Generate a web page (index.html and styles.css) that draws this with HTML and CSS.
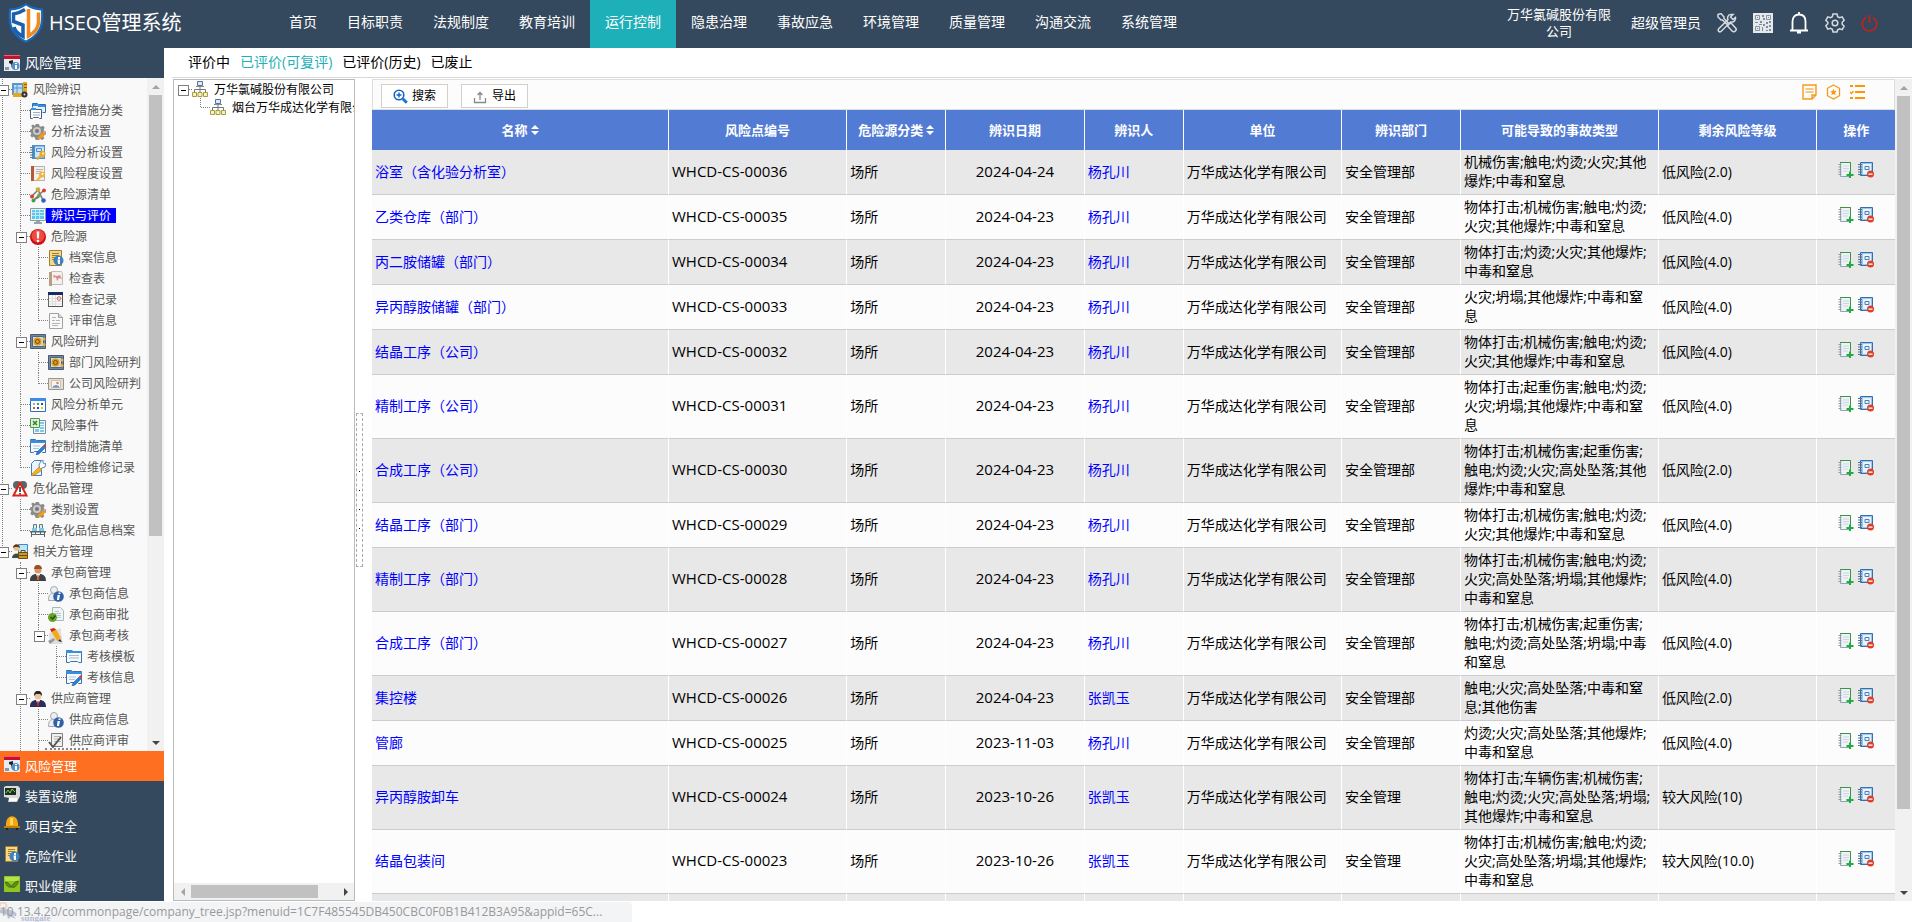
FILE: index.html
```html
<!DOCTYPE html>
<html lang="zh-CN">
<head>
<meta charset="utf-8">
<title>HSEQ管理系统</title>
<link rel="stylesheet" href="styles.css">
</head>
<body>
<svg class="sprite" aria-hidden="true">
  <symbol id="i-risk" viewBox="0 0 16 16"><path fill="#e9edf2" d="M0 0h16v16H0z"/><path fill="#c8102e" d="M0 0h16v4H0z"/><path fill="#f06070" d="M0 0h16v1H0z"/><path fill="#222" d="M5 6l4-1v2l1 6H8l-1-4-2-1z"/><circle cx="11.500" cy="11" r="4" fill="#5a8fc4"/><path fill="#fff" d="M11 8h2v1h-2zM11 10h2v4h-2z"/><path fill="#8a97a8" d="M1 12h4v3H1z"/></symbol>
  <symbol id="i-survey" viewBox="0 0 16 16"><path fill="#5b95cf" d="M0 1h12v12H0z"/><path fill="#b9dcf5" d="M2 3h8v8H2z"/><path stroke="#5b95cf" d="M5 3v8M2 6h8" fill="none"/><path fill="#e2a71a" d="M11 0h4v10h-4z"/><path fill="#8a5f00" d="M12 2h3v1h-3zM12 5h3v1h-3z"/><path fill="#e2a71a" d="M1 11h10v4H1z"/><circle cx="12.500" cy="12.500" r="3" fill="#333"/><circle cx="12.500" cy="12.500" r="1" fill="#ddd"/></symbol>
  <symbol id="i-folders" viewBox="0 0 16 16"><path fill="#e3f1fc" stroke="#2a6fb8" d="M2.500 4.500v-4h5l1 1h7v8h-3"/><path fill="#3a8ee0" d="M3 1h5v2H3zM8 2h7v2H8z"/><path fill="#fbfdff" stroke="#4a6178" d="M.5 15.500v-9h11v9h-2l-1-1h-5l-1 1z"/><path fill="#3a8ee0" d="M1 5h5v2H1z"/><path stroke="#9db0c2" d="M3 9.500h7M3 12h7"/></symbol>
  <symbol id="i-gear" viewBox="0 0 16 16"><path fill="#8b8b8b" d="M6 0h3l.5 2 1.500.7 2-1 1.800 2-1.200 1.800.6 1.500 1.800.6v3l-2 .5-.7 1.200 1 2-2 1.700-2-1-1.200.5-.6 1.500H6l-.6-2L4 12.500l-2 1-1.700-2 1-1.800L1 8.500 0 8V5.500L1.700 5l.5-1.500-1-1.800L3 .5 4.800 1.700z"/><circle cx="7" cy="7" r="4" fill="#c9c9c9"/><circle cx="7" cy="7" r="2" fill="#777"/><path fill="#f09a1a" d="M8 13l5-5 2.500 2.500-5 4.500-3 .8z"/><path fill="#e29bb0" d="M13 7.500l1.500-1 1.500 2-1 1.500z"/></symbol>
  <symbol id="i-bookkey" viewBox="0 0 16 16"><path fill="#4d8fcc" d="M2 0h13v14H2z"/><path fill="#cfe5f7" d="M5 1.500h9v11H5z"/><path stroke="#5a7fa5" d="M0 2.500h4M0 5h4M0 7.500h4M0 10h4M0 12.500h4"/><path fill="none" stroke="#4d8fcc" d="M6.500 3.500h5v3h-5z"/><circle cx="12.500" cy="9" r="3" fill="#eda81e"/><circle cx="13" cy="8.500" r="1" fill="#fff"/><path stroke="#eda81e" stroke-width="2" d="M11 10.500l-4 4"/></symbol>
  <symbol id="i-pagekey" viewBox="0 0 16 16"><path fill="#f4efea" stroke="#b9b0a8" d="M2.500.5h12v14h-12z"/><path fill="#b5593a" d="M1 0h3v15H1z"/><path stroke="#b0b7c2" d="M6 3.500h7M6 5.500h5M6 7.500h4"/><circle cx="12" cy="8.500" r="3" fill="#f0b63a"/><circle cx="12.500" cy="8" r="1" fill="#fff"/><path stroke="#f0b63a" stroke-width="2" d="M11 10l-4 4.500"/></symbol>
  <symbol id="i-molecule" viewBox="0 0 16 16"><path stroke="#777" stroke-width="1.500" fill="none" d="M2 9l6-6 5 10M13 4L5 12M3 13l6-3"/><circle cx="8" cy="2.500" r="2.300" fill="#d8a63a"/><circle cx="14" cy="3.500" r="1.900" fill="#e03a2a"/><circle cx="2" cy="9.500" r="2" fill="#e03a2a"/><circle cx="3.500" cy="13.500" r="2" fill="#3ea53a"/><circle cx="9" cy="8.500" r="2" fill="#7aa05a"/><circle cx="13.500" cy="13.500" r="2.300" fill="#2f62c0"/></symbol>
  <symbol id="i-screen" viewBox="0 0 16 16"><path fill="#eef3f5" stroke="#8b9ba3" d="M.5.500h15v12H.5z"/><path fill="#5cc6ec" d="M2 2h12v9H2z"/><path stroke="#bfe9f8" d="M5.500 2v9M9.500 2v9M2 4.500h12M2 7.500h12"/><path fill="#9aa5aa" d="M6 13h4v1h2v2H4v-2h2z"/></symbol>
  <symbol id="i-alert" viewBox="0 0 16 16"><circle cx="8" cy="8" r="8" fill="#c9130d"/><circle cx="8" cy="7" r="6.500" fill="#ee4a40"/><path fill="#fff" d="M6.700 2.500h2.600L9 9.500H7z"/><circle cx="8" cy="12" r="1.300" fill="#fff"/></symbol>
  <symbol id="i-docinfo" viewBox="0 0 16 16"><path fill="#f3d88e" stroke="#a67c2a" d="M1.500.5h12v15h-12z"/><path stroke="#a67c2a" d="M4 3.500h7M4 5.500h7M4 7.500h3M4 9.500h2"/><circle cx="10.500" cy="10.500" r="5" fill="#3f82c0"/><path fill="#fff" d="M10 7h2v2h-2zM9.500 9.500H12v4.500h-2z"/></symbol>
  <symbol id="i-check" viewBox="0 0 16 16"><path fill="#f4f1ee" stroke="#c4bcb4" d="M3.500.5h10l1 2v11h-11z"/><path fill="#b89f84" d="M1 1h3v14H1z"/><path fill="#e08a88" d="M5 4l4 1 3-1 2 4-3-1-2 3-1-4-2 1z"/></symbol>
  <symbol id="i-calendar" viewBox="0 0 16 16"><path fill="#fafafa" stroke="#666" d="M.5.500h14v14H.5z"/><path fill="#1c2a63" d="M0 0h15v3H0z"/><path fill="#555" d="M14 3h1v12H0v-1h14z"/><path stroke="#ddd" d="M1 6.500h13M1 9.500h13M1 12h13M4.500 3v11M7.500 3v11"/><circle cx="11" cy="6.500" r="1.800" fill="none" stroke="#d5554f"/></symbol>
  <symbol id="i-doc" viewBox="0 0 16 16"><path fill="#f8f8f8" stroke="#a2a2a2" d="M1.500.5h9l4 4v11h-13z"/><path fill="#d6d6d6" stroke="#a2a2a2" d="M10.500.5v4h4"/><path stroke="#b5b5b5" d="M4 4.500h4M4 7.500h3M8 7.500h4M4 10.500h8M4 12.500h6"/></symbol>
  <symbol id="i-safe" viewBox="0 0 16 16"><path fill="#7286a0" stroke="#4a5c74" d="M.5.500h15v14H.5z"/><path fill="#d7dbe0" stroke="#53657d" d="M2.500 2.500h11v10h-11z"/><circle cx="7.500" cy="7.500" r="4" fill="#dc9b1c"/><circle cx="7.500" cy="7.500" r="2" fill="none" stroke="#7a4f00"/><circle cx="14" cy="5" r="1.500" fill="#f0b030"/><circle cx="14" cy="10.500" r="1.500" fill="#f0b030"/></symbol>
  <symbol id="i-card" viewBox="0 0 16 16"><path fill="#e6dfd5" stroke="#9c948a" d="M.5 2.500h15v11H.5z"/><path fill="#f7f4f0" stroke="#c9c0b4" d="M3.500 4.500h9v7h-9z"/><circle cx="9.500" cy="7" r="1.300" fill="#d88b4a"/><path fill="#6d98c6" d="M5 10l3-1 3 1v1.500H5z"/></symbol>
  <symbol id="i-grid" viewBox="0 0 16 16"><path fill="#fff" stroke="#2a6fc0" d="M.5 1.500h15v13H.5z"/><path fill="#3b8bea" d="M0 1h16v3H0z"/><path fill="#8ab4e8" d="M3 6h2v2H3z"/><path fill="#f0c01a" d="M11 10h2v2h-2z"/><path fill="#35a04a" d="M7 6h2v2H7z"/><path fill="#1e4fa0" d="M11 6h2v2h-2zM7 10h2v2H7z"/><path fill="#e0632a" d="M3 10h2v2H3z"/></symbol>
  <symbol id="i-sheet" viewBox="0 0 16 16"><path fill="#f1fafd" stroke="#78909c" d="M3.500 2.500h12v13h-12z"/><path fill="#7ccbe4" d="M10 4h4v2h-4zM10 7h4v1h-4zM10 9h4v2h-4zM5 11h4v3H5zM10 12h4v2h-4z"/><path fill="#dff0d8" stroke="#4c9a46" d="M.5.500h9v9h-9z"/><path stroke="#2f8330" stroke-width="1.500" d="M3 3l4 4M7 3L3 7"/></symbol>
  <symbol id="i-folderpen" viewBox="0 0 16 16"><path fill="#f4faff" stroke="#3f6fa5" d="M.5 13.500v-13h5l1 1h9v12h-3l-1-1h-7l-1 1z"/><path fill="#3a8ee0" d="M0 1h6l1 1h9v2H0z"/><path stroke="#b3c2d0" d="M3 7h7M3 9.500h6"/><path fill="#2a7fd6" stroke="#1d4f8a" stroke-width=".5" d="M7 13l6-6 2 2-6 6-3 1z"/><path fill="#e23a2a" d="M13 6.500l1.500-1.500L16 7l-1.500 1.500z"/></symbol>
  <symbol id="i-folder" viewBox="0 0 16 16"><path fill="#f4faff" stroke="#3f6fa5" d="M.5 13.500v-12h5l1 1h9v11h-3l-1-1h-7l-1 1z"/><path fill="#3a8ee0" d="M0 1h6l1 1h9v2H0z"/><path stroke="#a9b9c8" d="M3 6.500h10M3 9h10"/></symbol>
  <symbol id="i-wrench" viewBox="0 0 16 16"><path fill="#eaf3fb" stroke="#3f7fc0" d="M1.500 3.500l3-3h7v15h-10z"/><path fill="#fff" stroke="#5b87b5" d="M9 5l2-4 2-1v3l2 1 1-1-1 4-3 1-2 2z"/><path fill="#f4b01e" stroke="#bd7a0a" stroke-width=".6" d="M2 14l7-7 3 3-7 5-3 1z"/></symbol>
  <symbol id="i-warn" viewBox="0 0 16 16"><circle cx="5" cy="4" r="4" fill="#5e6468"/><circle cx="11" cy="4" r="4" fill="#5e6468"/><path fill="#fff" stroke="#d9231c" stroke-width="2" d="M8 2l6.500 12.500h-13z"/><path fill="#222" d="M7.300 6h1.500v5H7.300zM7.300 12h1.500v1.500H7.300z"/></symbol>
  <symbol id="i-chem" viewBox="0 0 16 16"><path fill="#d8eef6" stroke="#5c7d8a" d="M3.500 1.500h3v6h-3zM9.500 1.500h3v6h-3z"/><path fill="#7cc8e2" d="M2 5h5v3H2zM9 5h5v3H9z"/><path fill="#5b666c" d="M0 8h16v1.500H0zM1 9h1v5H1zM14 9h1v5h-1zM5 9h1v2H5zM10 9h1v2h-1zM2 11h12v1H2z"/></symbol>
  <symbol id="i-partner" viewBox="0 0 16 16"><path fill="#bfe3f7" stroke="#3b8fc6" d="M6.500.5h9v10h-9z"/><circle cx="4.500" cy="4" r="3" fill="#f0c08c"/><path fill="#5b3a1a" d="M1 4c0-5 7-5 7 0L6 3 3 3z"/><path fill="#3c4f45" d="M0 14c0-6 9-6 9 0z"/><path fill="#c9972f" stroke="#6e4c0d" d="M6.500 8.500h9v6h-9z"/><path fill="none" stroke="#6e4c0d" d="M9 8V6.500h4V8M7 11.500h8"/></symbol>
  <symbol id="i-worker" viewBox="0 0 16 16"><circle cx="8" cy="5" r="3.500" fill="#d99668"/><path fill="#9c5226" d="M4 4c0-6 8-5 8 0z"/><path fill="#3d4147" d="M0 16c0-6 3-6 5-7h6c2 1 5 1 5 7z"/><path fill="#fff" d="M6 9h4l-2 5z"/><path fill="#e05a20" d="M7.500 10h1l.8 5H6.700z"/></symbol>
  <symbol id="i-supplier" viewBox="0 0 16 16"><circle cx="8" cy="5" r="3.500" fill="#efc49a"/><path fill="#2c2523" d="M4 5c-.5-7 8.500-7 8 0l-2-2H6z"/><path fill="#2a2f5a" d="M0 16c0-6 3-6 5-7h6c2 1 5 1 5 7z"/><path fill="#fff" d="M6 9h4l-2 5z"/><path fill="#b52435" d="M7.500 10h1l.8 5H6.700z"/></symbol>
  <symbol id="i-userinfo" viewBox="0 0 16 16"><circle cx="6" cy="4" r="3.500" fill="#eceef0" stroke="#a3a9ae"/><path fill="#eceef0" stroke="#a3a9ae" d="M.5 14.500c0-6 2-7 5-7s5 1 5 7z"/><circle cx="10.500" cy="10.500" r="5.300" fill="#2f62a8"/><path fill="#fff" d="M10.500 6.500h2v1.500h-2zM9.500 9H12l-1 5H9z"/></symbol>
  <symbol id="i-approve" viewBox="0 0 16 16"><path fill="#eff5f6" stroke="#a9b8bd" d="M4.500.5h8l3 3v10h-11z"/><path stroke="#b5cbd1" d="M7 4.500h4M7 6.500h6M9 8.500h4M9 10.500h4"/><circle cx="4.500" cy="10.500" r="4.500" fill="#6ba32a"/><path fill="none" stroke="#24520a" stroke-width="1.500" d="M2.500 10l2 2 3-3.500"/></symbol>
  <symbol id="i-pencil" viewBox="0 0 16 16"><path fill="#dedede" d="M1 5l12-5v5l2 11H2z"/><path fill="#f5a81a" d="M3 3l5-2 5 9-4 3z"/><path fill="#c32b22" d="M2 1l4-1 2 1.500L3.500 4z"/><path fill="#222" d="M12 11l2 3-4-1z"/><path fill="#999" d="M0 13l6-3 1 2-5 4z"/></symbol>
  <symbol id="i-review" viewBox="0 0 16 16"><path fill="#f1f1f1" stroke="#7d7d7d" d="M3.500.5h11v13h-11z"/><path stroke="#b3b3b3" d="M6 3.500h7M6 6h7M6 8.500h7"/><path fill="none" stroke="#555" stroke-width="2" d="M1 9l4 5 8-10"/></symbol>
  <symbol id="i-device" viewBox="0 0 16 16"><path fill="#d9dcd9" d="M0 1l2-1h12l2 2v8l-3 6H4l1-4-5-1z"/><path fill="#262b26" d="M1 2h11v7H1z"/><path fill="none" stroke="#6adf45" d="M2 7l2-3 2 3 2-4 3 3"/><path fill="#fff" d="M5 12h8v3H5z"/></symbol>
  <symbol id="i-helmet" viewBox="0 0 16 16"><path fill="#f2a911" d="M2 10c-1-13 13-13 12 0z"/><path fill="#ffd75e" d="M6 2h3v7H6z"/><path fill="#c97e06" d="M0 10h16v2H0z"/><path fill="#222" d="M2 12h2v2H2zM12 12h2v2h-2z"/></symbol>
  <symbol id="i-health" viewBox="0 0 16 16"><path fill="#8fc51e" d="M0 0h16v16H0z"/><path fill="#b7e04e" d="M1 1h14v4H1z"/><path fill="#5c8f1a" stroke="#355f10" stroke-width=".7" d="M1.500 6c2 0 5 2 6 5-3 1-6-2-6-5zM14.500 5c-2 0-6 2-7 6 3 2 6-2 7-6z"/></symbol>
  <symbol id="i-org" viewBox="0 0 16 16"><path fill="#dbe9f8" stroke="#56749a" d="M5.500.5h5v4h-5z"/><path fill="#888" d="M4 5h8v1H4z"/><path fill="none" stroke="#777" d="M8 6v3M2.500 11V8.500h11V11M8 8v3"/><path fill="#f6f2b8" stroke="#a59c46" d="M.5 11.500h4v4h-4zM6 11.500h4v4H6zM11.500 11.500h4v4h-4z"/></symbol>
  <symbol id="i-add" viewBox="0 0 16 16"><path fill="#eef3f8" stroke="#8fa3b3" d="M2.500.5h10v14h-10z"/><path fill="none" stroke="#3d9440" d="M2 .5h10.500v9"/><path stroke="#cbd6de" d="M5 4h6M5 6.500h6M5 9h5"/><path stroke="#8b9ba8" d="M.5 2.500h3M.5 5h3M.5 7.500h3M.5 10h3M.5 12.500h3"/><path fill="#1fae3c" d="M11 9.500h2V12h2.500v2H13v2.500h-2V14H8.500v-2H11z"/></symbol>
  <symbol id="i-remove" viewBox="0 0 16 16"><path fill="#9cc7ec" stroke="#356fae" d="M2.500.5h12v13h-12z"/><path fill="#e8f3fc" d="M5 2h8v10H5z"/><path fill="none" stroke="#4a80b8" d="M7 4.500h4v3H7z"/><path stroke="#55718d" d="M0 2.500h4M0 5h4M0 7.500h4M0 10h4M0 12.500h4"/><circle cx="12.500" cy="12" r="3.500" fill="#dc4028"/><path fill="#fff" d="M10.500 11.500h4v1.300h-4z"/></symbol>
</svg>

<header class="header">
  <div class="brand">
    <svg class="brand-mark" viewBox="0 0 36 40" aria-hidden="true"><path fill="#1768b8" d="M18 0c5 4 10 5 17 5.500 1 15 1 25-17 34.500C0 30.500 0 20.500 1 5.500 8 5 13 4 18 0z"/><path fill="#fff" d="M18 2.500c4 3 9 4.500 15 5 .5 13.500 0 22-15 30-15-8-15.500-16.500-15-30 6-.5 11-2 15-5z"/><path fill="none" stroke="#1b5fae" stroke-width="3.500" d="M17 6.500C13 9 9 10.500 5.500 11v7.500l9.500 3.500v11.500C10 31 7 28 6 24"/><path fill="none" stroke="#f08a1e" stroke-width="3.500" d="M20.500 6v27c7-4 10-9 10-14V9.500"/></svg>
    <span>HSEQ管理系统</span>
  </div>
  <nav class="nav">
    <a href="#">首页</a><a href="#">目标职责</a><a href="#">法规制度</a><a href="#">教育培训</a><a href="#" class="active">运行控制</a><a href="#">隐患治理</a><a href="#">事故应急</a><a href="#">环境管理</a><a href="#">质量管理</a><a href="#">沟通交流</a><a href="#">系统管理</a>
  </nav>
  <div class="account">
    <span class="company">万华氯碱股份有限公司</span>
    <span class="user">超级管理员</span>
    <button class="icon-btn" aria-label="工具"><svg viewBox="0 0 20 20" width="20" height="20"><g fill="none" stroke="#d4dae0" stroke-width="1.500"><path d="M1 1.500l3-1 3 3.500v1.500l4 4-1.500 1.500-4-4H4L1 4zM12 11l2-1 5 5.500c1 2-2 4-3.500 3L10.500 13z"/><path d="M14 1.500c-3 0-4 3-3 5L1.500 16c-1 2 1 3.500 2.500 2.500L13.500 9c3 .5 5.500-1.500 5-4.500L16 6.500 13.500 4 16 1.500z"/></g></svg></button>
    <button class="icon-btn" aria-label="二维码"><svg viewBox="0 0 20 20" width="20" height="20"><path fill="#e6e9ec" d="M0 0h20v20H0z"/><path fill="none" stroke="#8794a1" d="M2.500 2.500h4v4h-4zM13.500 2.500h4v4h-4zM2.500 13.500h4v4h-4z"/><path fill="#7f8d9b" d="M4 4h1v1H4zM15 4h1v1h-1zM4 15h1v1H4zM9 2h2v2H9zM10 5h2v2h-2zM2 9h3v1H2zM7 8h2v2H7zM6 11h3v1H6zM13 9h2v2h-2zM16 8h2v2h-2zM10 11h2v2h-2zM9 14h1v4H9zM13 13h2v2h-2zM16 12h2v2h-2zM13 17h2v1h-2zM16 16h2v2h-2z"/></svg></button>
    <button class="icon-btn" aria-label="通知"><svg viewBox="0 0 20 22" width="20" height="22"><path fill="none" stroke="#fff" stroke-width="1.800" d="M10 0v2.500M1 18.500h18M3.500 18V9.500C3.500 5 6 2.500 10 2.500s6.500 2.500 6.500 7V18M8 20.500h4"/></svg></button>
    <button class="icon-btn" aria-label="设置"><svg viewBox="0 0 20 20" width="20" height="20"><path fill="none" stroke="#d4dae0" stroke-width="1.500" d="M8 1h4l.7 2.700 1.800 1 2.700-.8 2 3.400-2 2v1.900l2 2-2 3.400-2.700-.8-1.800 1L12 19H8l-.7-2.700-1.800-1-2.700.8-2-3.400 2-2V9.300l-2-2 2-3.400 2.700.8 1.800-1z"/><circle cx="10" cy="10" r="2.800" fill="none" stroke="#d4dae0" stroke-width="1.500"/></svg></button>
    <button class="icon-btn" aria-label="退出"><svg viewBox="0 0 17 18" width="17" height="18"><path fill="none" stroke="#c8201a" stroke-width="1.600" d="M5 3.500a7.200 7.200 0 1 0 7 0M8.500 1v8"/></svg></button>
  </div>
</header>

<div class="body">
  <aside class="sidebar">
    <h2 class="side-title"><svg class="ico"><use href="#i-risk"/></svg>风险管理</h2>
    <div class="side-tree">
      <ul class="tree">
        <li class="open"><a href="#"><svg class="ico"><use href="#i-survey"/></svg><span>风险辨识</span></a>
          <ul>
            <li><a href="#"><svg class="ico"><use href="#i-folders"/></svg><span>管控措施分类</span></a></li>
            <li><a href="#"><svg class="ico"><use href="#i-gear"/></svg><span>分析法设置</span></a></li>
            <li><a href="#"><svg class="ico"><use href="#i-bookkey"/></svg><span>风险分析设置</span></a></li>
            <li><a href="#"><svg class="ico"><use href="#i-pagekey"/></svg><span>风险程度设置</span></a></li>
            <li><a href="#"><svg class="ico"><use href="#i-molecule"/></svg><span>危险源清单</span></a></li>
            <li><a href="#" class="selected"><svg class="ico"><use href="#i-screen"/></svg><span>辨识与评价</span></a></li>
            <li class="open"><a href="#"><svg class="ico"><use href="#i-alert"/></svg><span>危险源</span></a>
              <ul>
                <li><a href="#"><svg class="ico"><use href="#i-docinfo"/></svg><span>档案信息</span></a></li>
                <li><a href="#"><svg class="ico"><use href="#i-check"/></svg><span>检查表</span></a></li>
                <li><a href="#"><svg class="ico"><use href="#i-calendar"/></svg><span>检查记录</span></a></li>
                <li><a href="#"><svg class="ico"><use href="#i-doc"/></svg><span>评审信息</span></a></li>
              </ul>
            </li>
            <li class="open"><a href="#"><svg class="ico"><use href="#i-safe"/></svg><span>风险研判</span></a>
              <ul>
                <li><a href="#"><svg class="ico"><use href="#i-safe"/></svg><span>部门风险研判</span></a></li>
                <li><a href="#"><svg class="ico"><use href="#i-card"/></svg><span>公司风险研判</span></a></li>
              </ul>
            </li>
            <li><a href="#"><svg class="ico"><use href="#i-grid"/></svg><span>风险分析单元</span></a></li>
            <li><a href="#"><svg class="ico"><use href="#i-sheet"/></svg><span>风险事件</span></a></li>
            <li><a href="#"><svg class="ico"><use href="#i-folderpen"/></svg><span>控制措施清单</span></a></li>
            <li><a href="#"><svg class="ico"><use href="#i-wrench"/></svg><span>停用检维修记录</span></a></li>
          </ul>
        </li>
        <li class="open"><a href="#"><svg class="ico"><use href="#i-warn"/></svg><span>危化品管理</span></a>
          <ul>
            <li><a href="#"><svg class="ico"><use href="#i-gear"/></svg><span>类别设置</span></a></li>
            <li><a href="#"><svg class="ico"><use href="#i-chem"/></svg><span>危化品信息档案</span></a></li>
          </ul>
        </li>
        <li class="open"><a href="#"><svg class="ico"><use href="#i-partner"/></svg><span>相关方管理</span></a>
          <ul>
            <li class="open"><a href="#"><svg class="ico"><use href="#i-worker"/></svg><span>承包商管理</span></a>
              <ul>
                <li><a href="#"><svg class="ico"><use href="#i-userinfo"/></svg><span>承包商信息</span></a></li>
                <li><a href="#"><svg class="ico"><use href="#i-approve"/></svg><span>承包商审批</span></a></li>
                <li class="open"><a href="#"><svg class="ico"><use href="#i-pencil"/></svg><span>承包商考核</span></a>
                  <ul>
                    <li><a href="#"><svg class="ico"><use href="#i-folder"/></svg><span>考核模板</span></a></li>
                    <li><a href="#"><svg class="ico"><use href="#i-folderpen"/></svg><span>考核信息</span></a></li>
                  </ul>
                </li>
              </ul>
            </li>
            <li class="open more"><a href="#"><svg class="ico"><use href="#i-supplier"/></svg><span>供应商管理</span></a>
              <ul>
                <li><a href="#"><svg class="ico"><use href="#i-userinfo"/></svg><span>供应商信息</span></a></li>
                <li class="more"><a href="#"><svg class="ico"><use href="#i-review"/></svg><span>供应商评审</span></a></li>
              </ul>
            </li>
          </ul>
        </li>
      </ul>
      <div class="scroll-v side-scroll"><i class="arrow up dim"></i><b class="thumb"></b><i class="rest"></i><i class="arrow down"></i></div>
      <div class="grip"></div>
    </div>
    <nav class="modules">
      <a href="#" class="active"><svg class="ico"><use href="#i-risk"/></svg>风险管理</a>
      <a href="#"><svg class="ico"><use href="#i-device"/></svg>装置设施</a>
      <a href="#"><svg class="ico"><use href="#i-helmet"/></svg>项目安全</a>
      <a href="#"><svg class="ico"><use href="#i-docinfo"/></svg>危险作业</a>
      <a href="#"><svg class="ico"><use href="#i-health"/></svg>职业健康</a>
    </nav>
  </aside>

  <main class="main">
    <nav class="tabs"><a href="#">评价中</a><a href="#" class="active">已评价(可复评)</a><a href="#">已评价(历史)</a><a href="#">已废止</a></nav>
    <div class="workspace">
      <section class="org">
        <div class="org-view">
          <ul class="tree">
            <li class="open last"><a href="#"><svg class="ico"><use href="#i-org"/></svg><span>万华氯碱股份有限公司</span></a>
              <ul><li><a href="#"><svg class="ico"><use href="#i-org"/></svg><span>烟台万华成达化学有限公司</span></a></li></ul>
            </li>
          </ul>
        </div>
        <div class="scroll-h"><i class="arrow left dim"></i><b class="thumb"></b><i class="rest"></i><i class="arrow right"></i></div>
      </section>
      <div class="splitter"><div class="handle"><i></i><i></i><i></i><i></i></div></div>
      <section class="list">
        <div class="toolbar">
          <button class="btn"><svg width="15" height="15" viewBox="0 0 15 15"><circle cx="6" cy="6" r="4.800" fill="none" stroke="#1565c0" stroke-width="1.600"/><path stroke="#1565c0" stroke-width="1.400" d="M3.500 6h5M6 3.500v5"/><path stroke="#1976d2" stroke-width="3" d="M9.800 9.800l4 4"/></svg>搜索</button>
          <button class="btn"><svg width="15" height="15" viewBox="0 0 15 15"><path fill="none" stroke="#888" stroke-width="1.300" d="M1.500 9v4.500h11V9M7 11V3.500M4.500 6L7 3.500 9.500 6"/></svg>导出</button>
          <div class="tools">
            <button class="icon-btn" aria-label="备注"><svg width="15" height="16" viewBox="0 0 15 16"><path fill="none" stroke="#f59a16" stroke-width="1.400" d="M1 1h13v10l-4 4H1zM14 11h-4v4"/><path stroke="#f7b455" stroke-width="1.500" d="M3.500 5h8M3.500 8h8"/></svg></button>
            <button class="icon-btn" aria-label="收藏"><svg width="15" height="16" viewBox="0 0 15 16"><path fill="none" stroke="#f59a16" stroke-width="1.300" d="M7.500 1l6 3.300v7.400L7.500 15l-6-3.300V4.300z"/><path fill="#f59a16" d="M7.500 4.800l1 2.200 2.300.2-1.700 1.600.5 2.400-2.100-1.200-2.100 1.200.5-2.400L4.200 7.200 6.500 7z"/></svg></button>
            <button class="icon-btn" aria-label="列表"><svg width="15" height="16" viewBox="0 0 15 16"><path stroke="#ff9500" stroke-width="2" d="M5 2h10M5 8h10M5 14h10M0 2h3M0 14h3"/><path fill="none" stroke="#ff9500" stroke-width="1.300" d="M0 8l1.500 1.500L3.500 7"/></svg></button>
          </div>
        </div>
        <div class="table-view">
          <table class="grid">
            <colgroup><col class="c-name"><col class="c-code"><col class="c-kind"><col class="c-date"><col class="c-person"><col class="c-unit"><col class="c-dept"><col class="c-types"><col class="c-level"><col class="c-ops"></colgroup>
            <thead><tr><th>名称<svg class="sort" viewBox="0 0 8 10"><path d="M4 0l4 4H0zM4 10L0 6h8z"/></svg></th><th>风险点编号</th><th>危险源分类<svg class="sort" viewBox="0 0 8 10"><path d="M4 0l4 4H0zM4 10L0 6h8z"/></svg></th><th>辨识日期</th><th>辨识人</th><th>单位</th><th>辨识部门</th><th>可能导致的事故类型</th><th>剩余风险等级</th><th>操作</th></tr></thead>
            <tbody>
              <tr><td><a href="#">浴室（含化验分析室）</a></td><td class="num">WHCD-CS-00036</td><td>场所</td><td class="num date">2024-04-24</td><td><a href="#">杨孔川</a></td><td>万华成达化学有限公司</td><td>安全管理部</td><td>机械伤害;触电;灼烫;火灾;其他爆炸;中毒和窒息</td><td>低风险(2.0)</td><td><div class="ops"><button class="icon-btn" aria-label="新增"><svg class="ico"><use href="#i-add"/></svg></button><button class="icon-btn" aria-label="移除"><svg class="ico"><use href="#i-remove"/></svg></button></div></td></tr>
              <tr><td><a href="#">乙类仓库（部门）</a></td><td class="num">WHCD-CS-00035</td><td>场所</td><td class="num date">2024-04-23</td><td><a href="#">杨孔川</a></td><td>万华成达化学有限公司</td><td>安全管理部</td><td>物体打击;机械伤害;触电;灼烫;火灾;其他爆炸;中毒和窒息</td><td>低风险(4.0)</td><td><div class="ops"><button class="icon-btn" aria-label="新增"><svg class="ico"><use href="#i-add"/></svg></button><button class="icon-btn" aria-label="移除"><svg class="ico"><use href="#i-remove"/></svg></button></div></td></tr>
              <tr><td><a href="#">丙二胺储罐（部门）</a></td><td class="num">WHCD-CS-00034</td><td>场所</td><td class="num date">2024-04-23</td><td><a href="#">杨孔川</a></td><td>万华成达化学有限公司</td><td>安全管理部</td><td>物体打击;灼烫;火灾;其他爆炸;中毒和窒息</td><td>低风险(4.0)</td><td><div class="ops"><button class="icon-btn" aria-label="新增"><svg class="ico"><use href="#i-add"/></svg></button><button class="icon-btn" aria-label="移除"><svg class="ico"><use href="#i-remove"/></svg></button></div></td></tr>
              <tr><td><a href="#">异丙醇胺储罐（部门）</a></td><td class="num">WHCD-CS-00033</td><td>场所</td><td class="num date">2024-04-23</td><td><a href="#">杨孔川</a></td><td>万华成达化学有限公司</td><td>安全管理部</td><td>火灾;坍塌;其他爆炸;中毒和窒息</td><td>低风险(4.0)</td><td><div class="ops"><button class="icon-btn" aria-label="新增"><svg class="ico"><use href="#i-add"/></svg></button><button class="icon-btn" aria-label="移除"><svg class="ico"><use href="#i-remove"/></svg></button></div></td></tr>
              <tr><td><a href="#">结晶工序（公司）</a></td><td class="num">WHCD-CS-00032</td><td>场所</td><td class="num date">2024-04-23</td><td><a href="#">杨孔川</a></td><td>万华成达化学有限公司</td><td>安全管理部</td><td>物体打击;机械伤害;触电;灼烫;火灾;其他爆炸;中毒和窒息</td><td>低风险(4.0)</td><td><div class="ops"><button class="icon-btn" aria-label="新增"><svg class="ico"><use href="#i-add"/></svg></button><button class="icon-btn" aria-label="移除"><svg class="ico"><use href="#i-remove"/></svg></button></div></td></tr>
              <tr><td><a href="#">精制工序（公司）</a></td><td class="num">WHCD-CS-00031</td><td>场所</td><td class="num date">2024-04-23</td><td><a href="#">杨孔川</a></td><td>万华成达化学有限公司</td><td>安全管理部</td><td>物体打击;起重伤害;触电;灼烫;火灾;坍塌;其他爆炸;中毒和窒息</td><td>低风险(4.0)</td><td><div class="ops"><button class="icon-btn" aria-label="新增"><svg class="ico"><use href="#i-add"/></svg></button><button class="icon-btn" aria-label="移除"><svg class="ico"><use href="#i-remove"/></svg></button></div></td></tr>
              <tr><td><a href="#">合成工序（公司）</a></td><td class="num">WHCD-CS-00030</td><td>场所</td><td class="num date">2024-04-23</td><td><a href="#">杨孔川</a></td><td>万华成达化学有限公司</td><td>安全管理部</td><td>物体打击;机械伤害;起重伤害;触电;灼烫;火灾;高处坠落;其他爆炸;中毒和窒息</td><td>低风险(2.0)</td><td><div class="ops"><button class="icon-btn" aria-label="新增"><svg class="ico"><use href="#i-add"/></svg></button><button class="icon-btn" aria-label="移除"><svg class="ico"><use href="#i-remove"/></svg></button></div></td></tr>
              <tr><td><a href="#">结晶工序（部门）</a></td><td class="num">WHCD-CS-00029</td><td>场所</td><td class="num date">2024-04-23</td><td><a href="#">杨孔川</a></td><td>万华成达化学有限公司</td><td>安全管理部</td><td>物体打击;机械伤害;触电;灼烫;火灾;其他爆炸;中毒和窒息</td><td>低风险(4.0)</td><td><div class="ops"><button class="icon-btn" aria-label="新增"><svg class="ico"><use href="#i-add"/></svg></button><button class="icon-btn" aria-label="移除"><svg class="ico"><use href="#i-remove"/></svg></button></div></td></tr>
              <tr><td><a href="#">精制工序（部门）</a></td><td class="num">WHCD-CS-00028</td><td>场所</td><td class="num date">2024-04-23</td><td><a href="#">杨孔川</a></td><td>万华成达化学有限公司</td><td>安全管理部</td><td>物体打击;机械伤害;触电;灼烫;火灾;高处坠落;坍塌;其他爆炸;中毒和窒息</td><td>低风险(4.0)</td><td><div class="ops"><button class="icon-btn" aria-label="新增"><svg class="ico"><use href="#i-add"/></svg></button><button class="icon-btn" aria-label="移除"><svg class="ico"><use href="#i-remove"/></svg></button></div></td></tr>
              <tr><td><a href="#">合成工序（部门）</a></td><td class="num">WHCD-CS-00027</td><td>场所</td><td class="num date">2024-04-23</td><td><a href="#">杨孔川</a></td><td>万华成达化学有限公司</td><td>安全管理部</td><td>物体打击;机械伤害;起重伤害;触电;灼烫;高处坠落;坍塌;中毒和窒息</td><td>低风险(4.0)</td><td><div class="ops"><button class="icon-btn" aria-label="新增"><svg class="ico"><use href="#i-add"/></svg></button><button class="icon-btn" aria-label="移除"><svg class="ico"><use href="#i-remove"/></svg></button></div></td></tr>
              <tr><td><a href="#">集控楼</a></td><td class="num">WHCD-CS-00026</td><td>场所</td><td class="num date">2024-04-23</td><td><a href="#">张凯玉</a></td><td>万华成达化学有限公司</td><td>安全管理部</td><td>触电;火灾;高处坠落;中毒和窒息;其他伤害</td><td>低风险(2.0)</td><td><div class="ops"><button class="icon-btn" aria-label="新增"><svg class="ico"><use href="#i-add"/></svg></button><button class="icon-btn" aria-label="移除"><svg class="ico"><use href="#i-remove"/></svg></button></div></td></tr>
              <tr><td><a href="#">管廊</a></td><td class="num">WHCD-CS-00025</td><td>场所</td><td class="num date">2023-11-03</td><td><a href="#">杨孔川</a></td><td>万华成达化学有限公司</td><td>安全管理部</td><td>灼烫;火灾;高处坠落;其他爆炸;中毒和窒息</td><td>低风险(4.0)</td><td><div class="ops"><button class="icon-btn" aria-label="新增"><svg class="ico"><use href="#i-add"/></svg></button><button class="icon-btn" aria-label="移除"><svg class="ico"><use href="#i-remove"/></svg></button></div></td></tr>
              <tr><td><a href="#">异丙醇胺卸车</a></td><td class="num">WHCD-CS-00024</td><td>场所</td><td class="num date">2023-10-26</td><td><a href="#">张凯玉</a></td><td>万华成达化学有限公司</td><td>安全管理</td><td>物体打击;车辆伤害;机械伤害;触电;灼烫;火灾;高处坠落;坍塌;其他爆炸;中毒和窒息</td><td>较大风险(10)</td><td><div class="ops"><button class="icon-btn" aria-label="新增"><svg class="ico"><use href="#i-add"/></svg></button><button class="icon-btn" aria-label="移除"><svg class="ico"><use href="#i-remove"/></svg></button></div></td></tr>
              <tr><td><a href="#">结晶包装间</a></td><td class="num">WHCD-CS-00023</td><td>场所</td><td class="num date">2023-10-26</td><td><a href="#">张凯玉</a></td><td>万华成达化学有限公司</td><td>安全管理</td><td>物体打击;机械伤害;触电;灼烫;火灾;高处坠落;坍塌;其他爆炸;中毒和窒息</td><td>较大风险(10.0)</td><td><div class="ops"><button class="icon-btn" aria-label="新增"><svg class="ico"><use href="#i-add"/></svg></button><button class="icon-btn" aria-label="移除"><svg class="ico"><use href="#i-remove"/></svg></button></div></td></tr>
              <tr class="next"><td></td><td></td><td></td><td></td><td></td><td></td><td></td><td></td><td></td><td></td></tr>
            </tbody>
          </table>
        </div>
      </section>
      <div class="scroll-v list-scroll"><i class="arrow up dim"></i><b class="thumb"></b><i class="rest"></i><i class="arrow down"></i></div>
    </div>
  </main>
</div>

<footer class="footer">
  <div class="vendor"><svg width="18" height="20" viewBox="0 0 18 20" aria-hidden="true"><circle cx="3" cy="4" r="3.500" fill="none" stroke="#f0975a" stroke-width="2"/><path fill="#3d5a98" d="M0 8c6-2 14 0 17 4l-4 1 3 4-5-2-3 2-1-4-7-2z"/></svg><span>sungate</span></div>
  <div class="status">10.13.4.20/commonpage/company_tree.jsp?menuid=1C7F485545DB450CBC0F0B1B412B3A95&amp;appid=65C...</div>
</footer>
</body>
</html>
```

FILE: styles.css
```css
* { box-sizing: border-box; }
body {
  margin: 0;
  height: 100vh;
  display: flex;
  flex-direction: column;
  overflow: hidden;
  background: #fff;
  color: #000;
  font: 14px/20px "Open Sans", "Noto Sans CJK SC", sans-serif;
}
a { text-decoration: none; color: inherit; }
ul { list-style: none; margin: 0; padding: 0; }
button { font: inherit; color: inherit; cursor: pointer; }
.sprite { position: absolute; width: 0; height: 0; }
.ico { width: 16px; height: 16px; flex: none; display: block; }
.icon-btn { border: 0; padding: 0; background: none; display: block; flex: none; }
.icon-btn svg { display: block; }

/* header */
.header { height: 48px; flex: none; display: flex; align-items: stretch; background: #35495e; color: #fff; }
.brand { width: 274px; padding: 0 0 2px 8px; display: flex; align-items: center; gap: 5px; flex: none; font-size: 20px; }
.brand-mark { width: 36px; height: 40px; }
.nav { display: flex; flex: 1; }
.nav a { padding: 0 15px; line-height: 44px; white-space: nowrap; }
.nav a.active { background: #1eb0b9; }
.account { display: flex; align-items: center; gap: 16px; padding: 0 34px 3px 0; }
.company { width: 108px; text-align: center; font-size: 13px; line-height: 17px; }
.user { white-space: nowrap; padding-left: 2px; }

/* sidebar */
.body { flex: 1; min-height: 0; display: flex; }
.sidebar { width: 164px; flex: none; display: flex; flex-direction: column; background: #f9f9f9; }
.side-title { margin: 0; height: 30px; flex: none; display: flex; align-items: center; gap: 5px; padding: 0 0 1px 4px; background: #35495e; color: #fff; font-size: 14px; font-weight: normal; }
.side-tree { position: relative; flex: 1; min-height: 0; display: flex; overflow: hidden; }
.side-tree > .tree { flex: 1; padding-top: 1px; margin-left: -2px; color: #555; }
.grip { position: absolute; left: 45px; right: 76px; bottom: 1px; border-top: 2px dotted #888; }
.modules a { height: 30px; display: flex; align-items: center; gap: 5px; padding: 0 0 1px 4px; background: #35495e; color: #fff; font-size: 13px; }
.modules .ico { margin-bottom: 3px; }
.modules a.active { background: #ff6f21; }

/* tree */
.tree { font-size: 12px; }
.tree ul { margin-left: 18px; }
.tree li { position: relative; }
.tree li::before { content: ""; position: absolute; left: 4px; top: 0; bottom: 0; border-left: 1px dotted #808080; }
.tree li:last-child:not(.more)::before { bottom: auto; height: 11px; }
.tree a { position: relative; display: flex; align-items: center; height: 21px; padding-left: 14px; white-space: nowrap; }
.tree a::before { content: ""; position: absolute; left: 5px; top: 10px; width: 9px; border-top: 1px dotted #808080; }
.tree .open > a::after { content: ""; position: absolute; left: 0; top: 6px; width: 9px; height: 9px; border: 1px solid #808080; background: linear-gradient(#000, #000) center / 5px 1px no-repeat #fff; }
.tree span { padding: 0 5px; line-height: 15px; }
.tree .selected span { background: #00f; color: #fff; }

/* scroll bars */
.scroll-v, .scroll-h { display: flex; background: #f1f1f1; flex: none; }
.scroll-v { width: 17px; flex-direction: column; }
.scroll-h { height: 17px; }
.arrow { width: 17px; height: 17px; flex: none; display: flex; align-items: center; justify-content: center; color: #444; }
.arrow::before { content: ""; border: 4px solid transparent; }
.arrow.dim { color: #a3a3a3; }
.up::before { border-bottom-color: currentColor; border-top: 0; }
.down::before { border-top-color: currentColor; border-bottom: 0; }
.left::before { border-right-color: currentColor; border-left: 0; }
.right::before { border-left-color: currentColor; border-right: 0; }
.thumb { background: #c1c1c1; }
.scroll-v .thumb { margin: 0 2px; }
.scroll-h .thumb { margin: 2px 0; }
.side-scroll .thumb { flex: 440; }
.side-scroll .rest { flex: 198; }
.scroll-h .thumb { flex: 128; }
.scroll-h .rest { flex: 19; }
.list-scroll .thumb { flex: 713; }
.list-scroll .rest { flex: 75; }

/* main area */
.main { flex: 1; min-width: 0; display: flex; flex-direction: column; padding-left: 8px; }
.tabs { height: 30px; flex: none; display: flex; align-items: center; gap: 10px; padding: 0 0 2px 16px; border-bottom: 1px solid #d9d9d9; }
.tabs a.active { color: #1eb0b9; }
.workspace { flex: 1; min-height: 0; display: flex; padding-top: 1px; }
.org { width: 182px; margin-left: 1px; flex: none; display: flex; flex-direction: column; border: 1px solid #bbb; }
.org-view { flex: 1; overflow: hidden; padding-left: 4px; }
.org .tree a { height: 18px; }
.org .tree li:last-child::before { height: 9px; }
.org .open.last::before { display: none; }
.org .tree a::before { top: 9px; }
.org .tree .open > a::after { top: 5px; }
.org .tree span { padding: 0 6px; }
.splitter { width: 17px; flex: none; display: flex; align-items: center; padding-left: 1px; }
.handle { width: 7px; height: 154px; border: 1px dashed #aaa; display: flex; flex-direction: column; align-items: center; justify-content: center; gap: 18px; padding-top: 20px; }
.handle i { width: 1px; height: 1px; background: #000; }
.list { flex: 1; min-width: 0; display: flex; flex-direction: column; }
.toolbar { height: 31px; flex: none; display: flex; align-items: flex-start; gap: 13px; padding: 4px 29px 0 8px; border: 1px solid #ddd; background: #fcfcfc; }
.btn { height: 24px; display: flex; align-items: center; gap: 4px; padding: 0 11px; border: 1px solid #d4d0c8; background: #fff; font-size: 12px; }
.tools { margin-left: auto; display: flex; gap: 9px; }
.table-view { flex: 1; min-height: 0; overflow: hidden; }

/* risk table */
.grid { width: 100%; table-layout: fixed; border-collapse: separate; border-spacing: 0; }
.c-name { width: 19.5%; }
.c-code { width: 11.7%; }
.c-kind, .c-person { width: 6.5%; }
.c-date { width: 9.1%; }
.c-unit, .c-level { width: 10.4%; }
.c-dept { width: 7.8%; }
.c-types { width: 13%; }
.c-ops { width: 5.1%; }
.grid th { height: 40px; padding: 0; background: #527bd4; color: #fff; font-size: 13px; font-weight: bold; border-right: 1px solid #fff; white-space: nowrap; }
.grid td { padding: 2px 3px 4px; line-height: 19px; border-right: 1px solid #fff; border-bottom: 1px solid #ccc; background: #fcfcfc; }
.grid tr:nth-child(odd) td { background: #e8e8e8; }
.grid th:last-child, .grid td:last-child { border-right: 0; }
.grid td a { color: #00f; }
.grid td.num { font-size: 15px; }
.grid td.date { text-align: center; }
.grid .next td { height: 45px; }
.sort { width: 8px; height: 10px; margin-left: 3px; fill: #fff; }
.ops { display: flex; justify-content: center; gap: 4px; padding-bottom: 3px; }

/* browser status line over the vendor mark */
.footer { position: relative; height: 21px; flex: none; padding-top: 1px; overflow: hidden; }
.vendor { display: flex; align-items: center; height: 20px; gap: 3px; font: bold 9px/20px "Liberation Serif", serif; color: #2a3f86; }
.vendor span { padding-top: 12px; }
.status { position: absolute; left: 0; top: 1px; height: 20px; padding-right: 30px; background: rgba(238, 239, 241, .7); color: #999; font-size: 12px; line-height: 20px; white-space: nowrap; border-top-right-radius: 4px; }
```
